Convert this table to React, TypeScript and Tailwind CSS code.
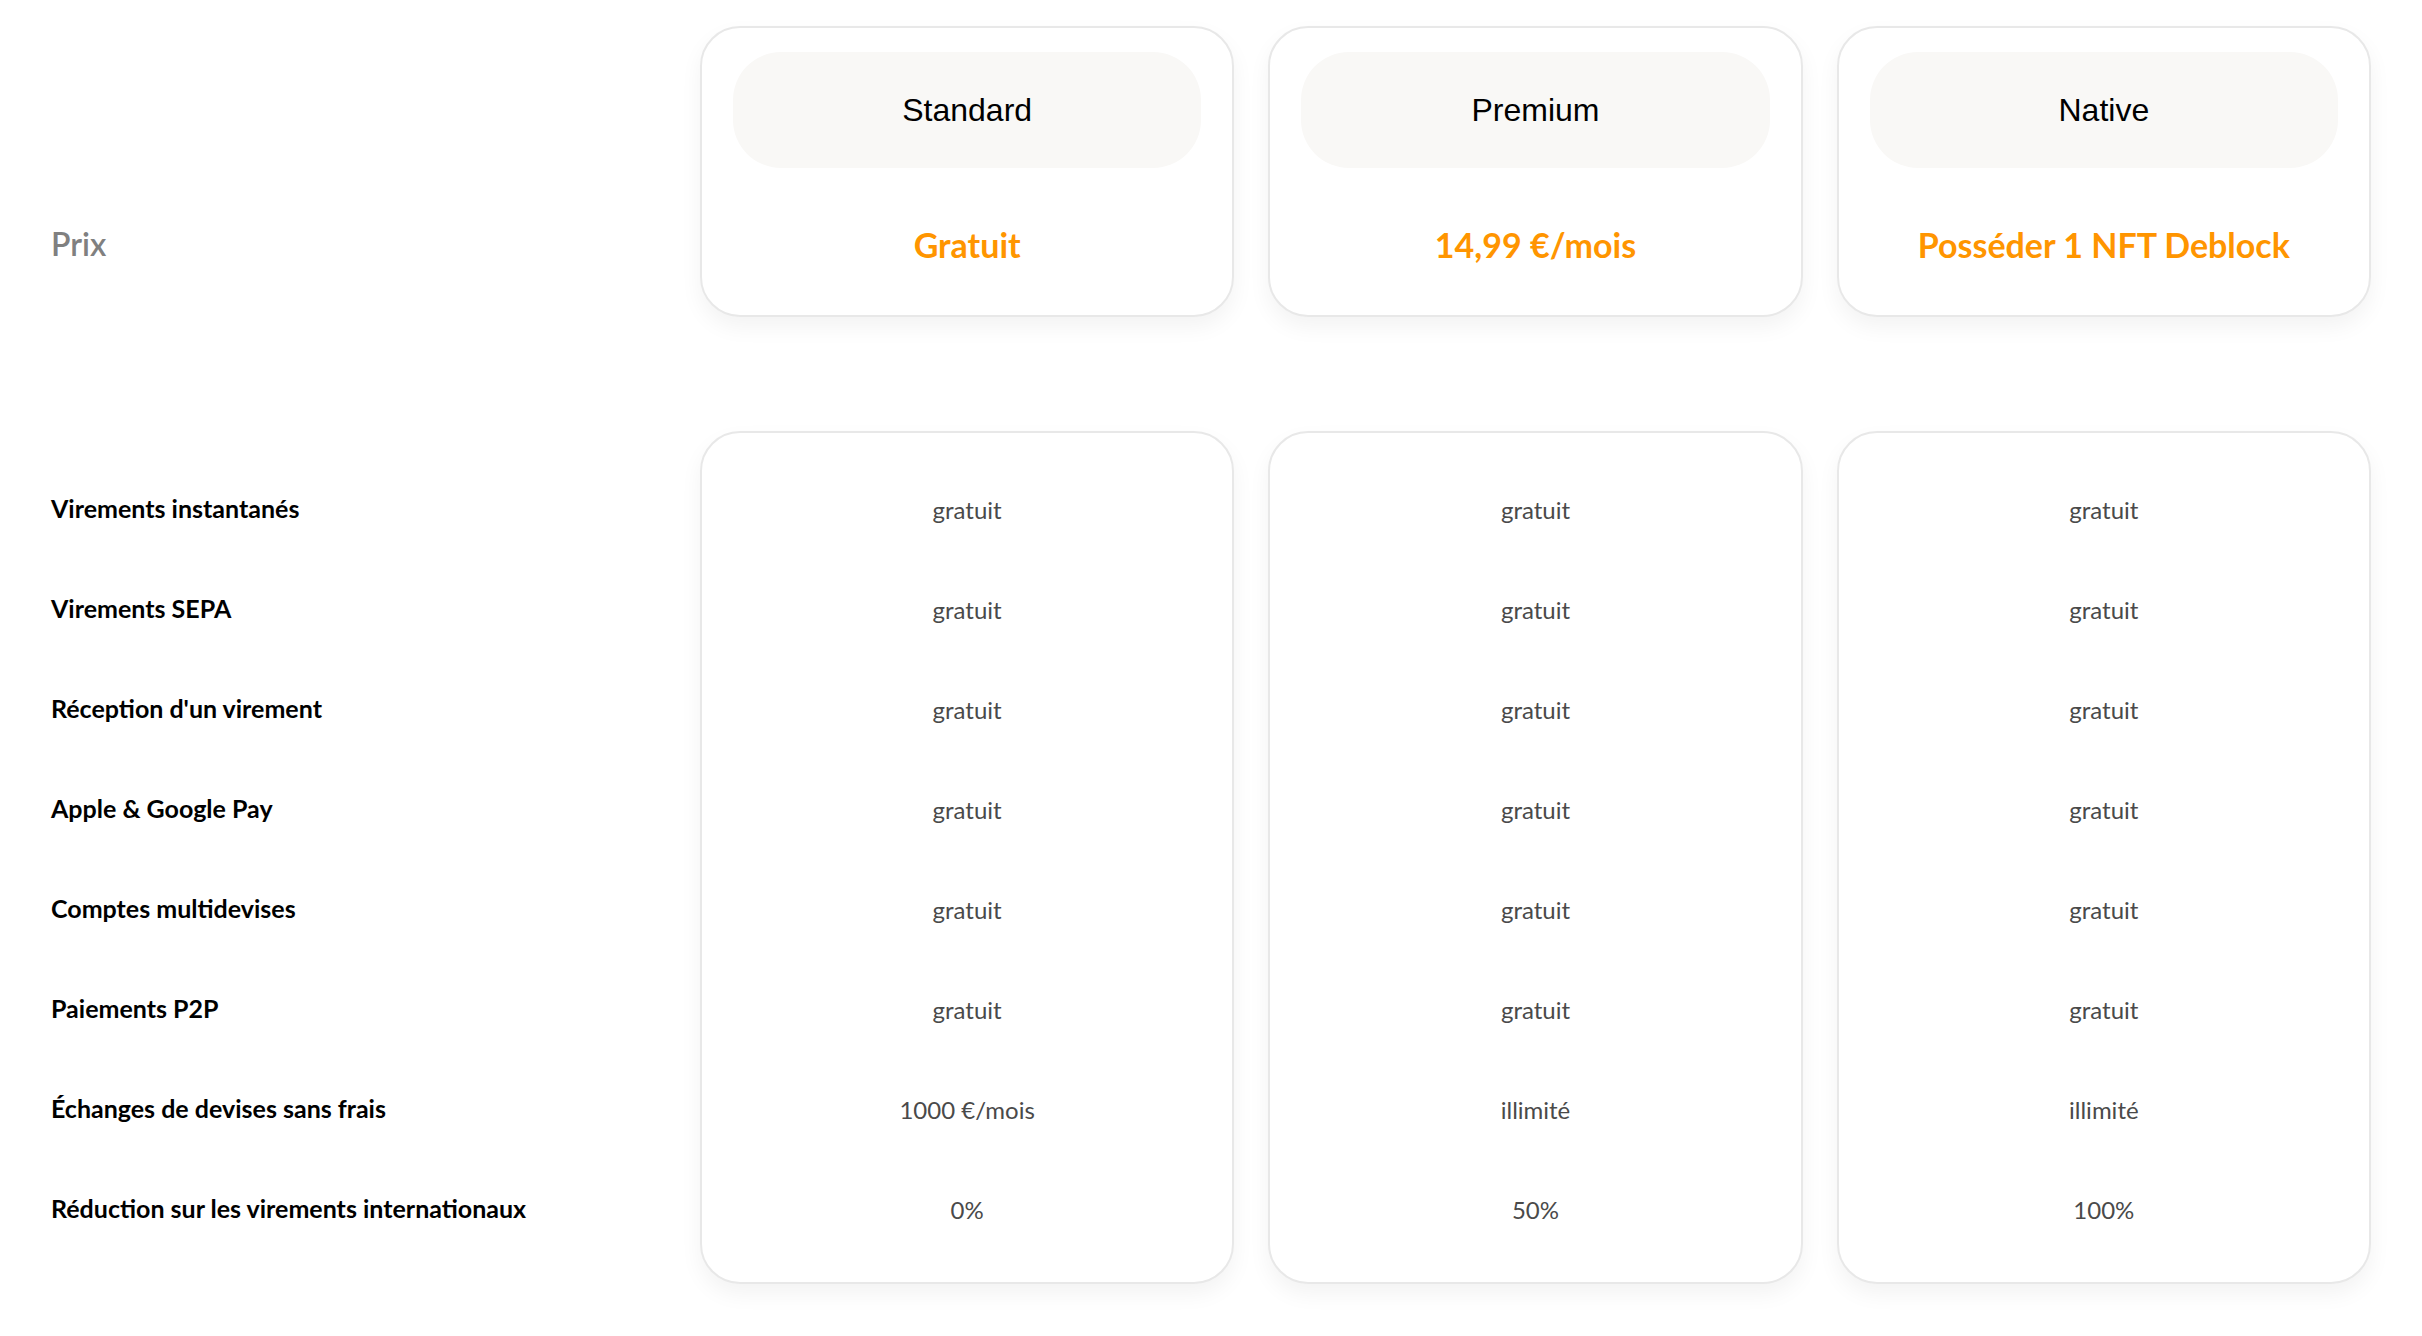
import React from "react";

const plans = [
  { name: "Standard", price: "Gratuit" },
  { name: "Premium", price: "14,99 €/mois" },
  { name: "Native", price: "Posséder 1 NFT Deblock" },
];

const features: { label: string; values: string[] }[] = [
  { label: "Virements instantanés", values: ["gratuit", "gratuit", "gratuit"] },
  { label: "Virements SEPA", values: ["gratuit", "gratuit", "gratuit"] },
  { label: "Réception d'un virement", values: ["gratuit", "gratuit", "gratuit"] },
  { label: "Apple & Google Pay", values: ["gratuit", "gratuit", "gratuit"] },
  { label: "Comptes multidevises", values: ["gratuit", "gratuit", "gratuit"] },
  { label: "Paiements P2P", values: ["gratuit", "gratuit", "gratuit"] },
  { label: "Échanges de devises sans frais", values: ["1000 €/mois", "illimité", "illimité"] },
  { label: "Réduction sur les virements internationaux", values: ["0%", "50%", "100%"] },
];

const avenir = "font-['Lato','Noto_Sans',sans-serif]";

export default function App() {
  return (
    <div className={`min-h-screen bg-white px-[51px] pt-[26px] ${avenir}`}>
      {/* Header row */}
      <div className="grid grid-cols-[615px_1fr_1fr_1fr] gap-x-[34px]">
        <div className="flex h-[291px] flex-col">
          <div className="h-[145px]" />
          <div className="flex h-[146px] items-center text-[32px] font-semibold text-[#808080]">
            Prix
          </div>
        </div>
        {plans.map((p) => (
          <div
            key={p.name}
            className="flex h-[291px] flex-col rounded-[40px] border-2 border-[#e8e8e8] bg-white px-[31px] pt-[24px] shadow-[0_10px_22px_rgba(0,0,0,0.05)]"
          >
            <div className="flex h-[116px] items-center justify-center rounded-[48px] bg-[#f9f8f6] font-['Liberation_Sans',Arial,sans-serif] text-[32px] text-black">
              {p.name}
            </div>
            <div className="flex flex-1 items-center justify-center pt-[5px] text-[34px] font-bold text-[#ff9500]">
              {p.price}
            </div>
          </div>
        ))}
      </div>

      {/* Features */}
      <div className="mt-[114px] grid grid-cols-[615px_1fr_1fr_1fr] gap-x-[34px]">
        <div className="flex flex-col pt-[28px] pb-[21px]">
          {features.map((f) => (
            <div key={f.label} className="flex h-[100px] items-center text-[25px] font-bold text-black">
              {f.label}
            </div>
          ))}
        </div>
        {[0, 1, 2].map((i) => (
          <div
            key={i}
            className="flex flex-col rounded-[40px] border-2 border-[#e8e8e8] bg-white pt-[27px] pb-[22px] shadow-[0_10px_22px_rgba(0,0,0,0.05)]"
          >
            {features.map((f) => (
              <div key={f.label} className="flex h-[100px] items-center justify-center text-[24px] text-[#4a4a4a]">
                {f.values[i]}
              </div>
            ))}
          </div>
        ))}
      </div>
    </div>
  );
}
